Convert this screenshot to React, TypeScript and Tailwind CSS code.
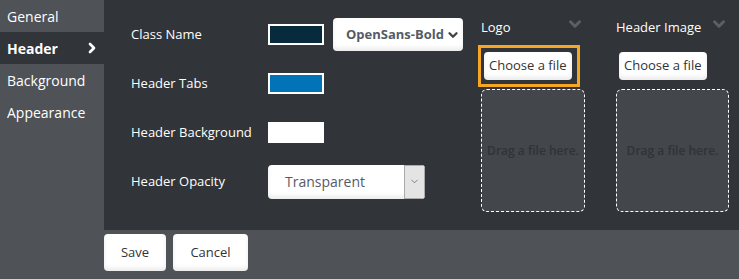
import { ChevronDown, ChevronRight } from "lucide-react";

const menu = ["General", "Header", "Background", "Appearance"];

function Swatch({ color }: { color: string }) {
	return <div className={`h-[21px] w-[56px] border-2 border-white ${color}`} />;
}

function FileColumn({ label, width, focused }: { label: string; width: string; focused?: boolean }) {
	return (
		<div className={`flex flex-col ${width}`}>
			<div className="flex h-[45px] items-center justify-between pt-[10px] pr-[1px]">
				<span className="text-[13px] text-white">{label}</span>
				<ChevronDown className="-mt-[8px] h-[18px] w-[18px] text-[#5c6066]" strokeWidth={4} />
			</div>
			<div
				className={`-ml-[3px] flex h-[42px] w-[102px] items-center border-[3px] ${
					focused ? "border-[#f5a623]" : "border-transparent"
				} pl-[3px]`}
			>
				<button className="h-[28px] whitespace-nowrap rounded-[4px] bg-white px-[5px] text-[13px] text-[#333] shadow-[inset_0_-3px_4px_rgba(0,0,0,0.08)]">
					Choose a file
				</button>
			</div>
			<div className="mt-[2px] flex h-[123px] items-center justify-center rounded-[6px] border-[1.5px] border-dashed border-white bg-[#43464b]">
				<span className="whitespace-nowrap text-[12px] font-semibold text-[#303338]">Drag a file here.</span>
			</div>
		</div>
	);
}

export default function App() {
	return (
		<div className="flex h-[279px] w-[739px] bg-[#4f5257] font-['Open_Sans',sans-serif]">
			<nav className="w-[104px] shrink-0">
				{menu.map((m) => (
					<div
						key={m}
						className={`flex h-[32px] items-center justify-between pl-[7px] pr-[4px] text-[14px] ${
							m === "Header" ? "bg-[#313438] font-bold text-white" : "text-white"
						}`}
					>
						{m}
						{m === "Header" && <ChevronRight className="h-[16px] w-[16px]" strokeWidth={4} />}
					</div>
				))}
			</nav>
			<div className="flex flex-1 flex-col">
				<div className="flex h-[230px] bg-[#313438] text-white">
					<div className="grid w-[374px] grid-cols-[137px_1fr] content-start gap-y-[16px] pl-[27px] pt-[18px] text-[13px]">
						<div className="flex h-[33px] items-center">Class Name</div>
						<div className="flex h-[33px] items-center gap-[9px]">
							<Swatch color="bg-[#062b3c]" />
							<div className="flex h-[33px] w-[130px] items-center justify-between whitespace-nowrap rounded-[4px] bg-white pl-[13px] pr-[3px] text-[13px] font-bold text-[#555b66] shadow-[inset_0_-3px_4px_rgba(0,0,0,0.08)]">
								OpenSans-Bold
								<ChevronDown className="h-[14px] w-[14px] shrink-0 text-[#444]" strokeWidth={4} />
							</div>
						</div>
						<div className="flex h-[33px] items-center">Header Tabs</div>
						<div className="flex h-[33px] items-center">
							<Swatch color="bg-[#0073b9]" />
						</div>
						<div className="flex h-[33px] items-center">Header Background</div>
						<div className="flex h-[33px] items-center">
							<div className="h-[21px] w-[56px] bg-white" />
						</div>
						<div className="flex h-[33px] items-center">Header Opacity</div>
						<div className="flex h-[33px] items-center">
							<div className="flex h-[34px] w-[157px] overflow-hidden rounded-[4px] bg-white shadow-[inset_0_-3px_4px_rgba(0,0,0,0.08)]">
								<span className="flex flex-1 items-center pl-[17px] text-[14px] text-[#555b66]">Transparent</span>
								<span className="flex w-[21px] items-center justify-center border border-[#aaa] bg-[#e4e4e4]">
									<ChevronDown className="h-[11px] w-[11px] text-[#555]" strokeWidth={1.5} />
								</span>
							</div>
						</div>
					</div>
					<div className="flex gap-[31px] pl-[3px]">
						<FileColumn label="Logo" width="w-[104px]" focused />
						<FileColumn label="Header Image" width="w-[113px]" />
					</div>
				</div>
				<div className="flex gap-[7px] pt-[4px]">
					<button className="h-[37px] w-[62px] rounded-[4px] bg-white text-[13px] text-[#333] shadow-[inset_0_-3px_4px_rgba(0,0,0,0.08)]">
						Save
					</button>
					<button className="h-[37px] w-[75px] rounded-[4px] bg-white text-[13px] text-[#333] shadow-[inset_0_-3px_4px_rgba(0,0,0,0.08)]">
						Cancel
					</button>
				</div>
			</div>
		</div>
	);
}
